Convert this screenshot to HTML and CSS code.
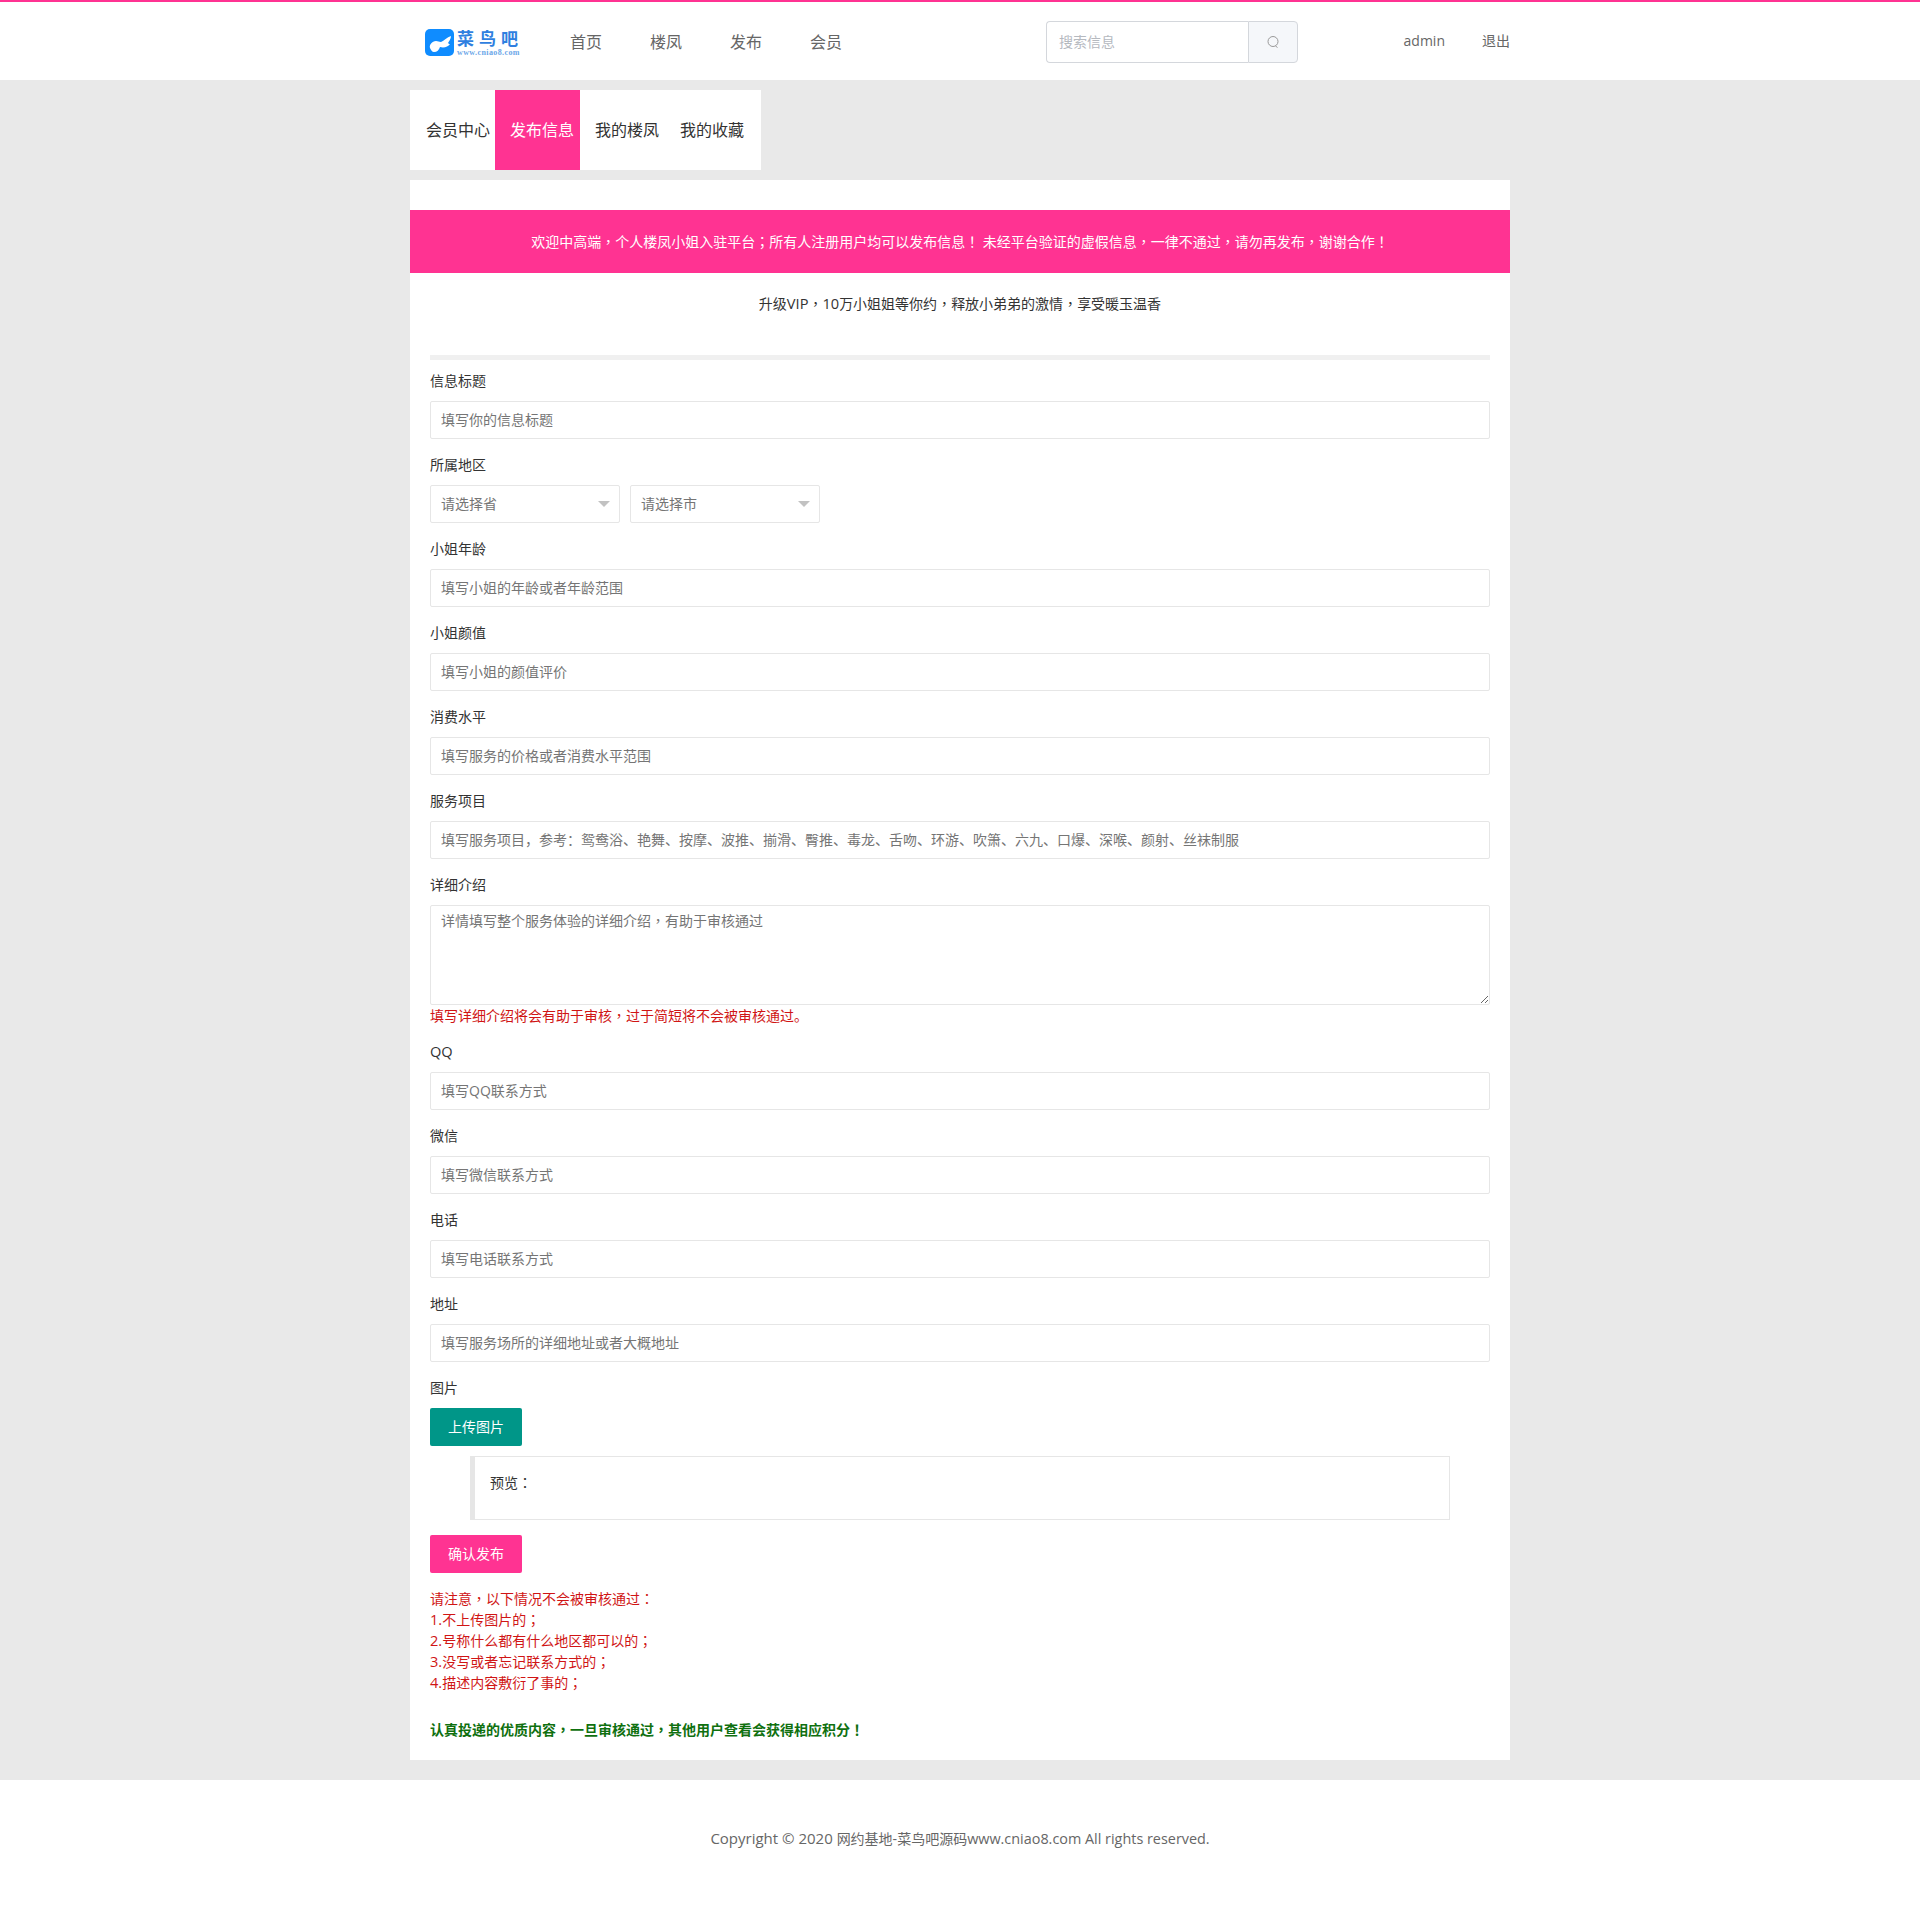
FILE: index.html
```html
<!DOCTYPE html>
<html lang="zh-CN">
<head>
<meta charset="utf-8">
<title>发布信息</title>
<link rel="stylesheet" href="styles.css">
</head>
<body>
<header class="topbar">
  <div class="wrap header-inner">
    <a class="logo" href="#">
      <svg class="logo-mark" viewBox="0 0 29 27" width="29" height="27">
        <rect width="29" height="27" rx="5" fill="#0f8cff"/>
        <path d="M5 19c-1-3 2-7 6-7 2 0 3 1 5 1 3-1 6-5 10-6 0 3-2 5-3 7 1 1 1 1 2 1-2 3-6 4-10 3-1 3-3 5-6 5-2 0-3-2-4-4z" fill="#fff"/>
      </svg>
      <span class="logo-text"><span class="logo-name">菜鸟吧</span><span class="logo-url">www.cniao8.com</span></span>
    </a>
    <nav class="nav">
      <a href="#">首页</a><a href="#">楼凤</a><a href="#">发布</a><a href="#">会员</a>
    </nav>
    <div class="search">
      <input class="search-input" placeholder="搜索信息">
      <button class="search-btn" aria-label="搜索">
        <svg viewBox="0 0 14 14" width="14" height="14" fill="none" stroke="#999" stroke-width="1"><circle cx="7" cy="6.5" r="5"/><path d="M9.5 11l2 1.5"/></svg>
      </button>
    </div>
    <div class="user"><a href="#">admin</a><a href="#">退出</a></div>
  </div>
</header>

<main class="wrap">
  <div class="tabs">
    <a class="tab" href="#">会员中心</a><a class="tab active" href="#">发布信息</a><a class="tab" href="#">我的楼凤</a><a class="tab" href="#">我的收藏</a>
  </div>

  <section class="panel">
    <div class="banner">欢迎中高端<span class="pt" lang="zh-TW">，</span>个人楼凤小姐入驻平台<span class="pt" lang="zh-TW">；</span>所有人注册用户均可以发布信息<span class="pt" lang="zh-TW">！</span> 未经平台验证的虚假信息<span class="pt" lang="zh-TW">，</span>一律不通过<span class="pt" lang="zh-TW">，</span>请勿再发布<span class="pt" lang="zh-TW">，</span>谢谢合作<span class="pt" lang="zh-TW">！</span></div>
    <p class="sub">升级<span class="latin">VIP</span><span class="pt" lang="zh-TW">，</span><span class="latin">10</span>万小姐姐等你约<span class="pt" lang="zh-TW">，</span>释放小弟弟的激情<span class="pt" lang="zh-TW">，</span>享受暖玉温香</p>
    <form class="form">
      <hr class="rule">
      <div class="item"><label>信息标题</label><input placeholder="填写你的信息标题"></div>
      <div class="item"><label>所属地区</label>
        <div class="selects">
          <div class="select">请选择省<i class="arrow"></i></div>
          <div class="select">请选择市<i class="arrow"></i></div>
        </div>
      </div>
      <div class="item"><label>小姐年龄</label><input placeholder="填写小姐的年龄或者年龄范围"></div>
      <div class="item"><label>小姐颜值</label><input placeholder="填写小姐的颜值评价"></div>
      <div class="item"><label>消费水平</label><input placeholder="填写服务的价格或者消费水平范围"></div>
      <div class="item"><label>服务项目</label><input placeholder="填写服务项目，参考：鸳鸯浴、艳舞、按摩、波推、揃滑、臀推、毒龙、舌吻、环游、吹箫、六九、口爆、深喉、颜射、丝袜制服"></div>
      <div class="item"><label>详细介绍</label>
        <textarea lang="zh-TW" placeholder="详情填写整个服务体验的详细介绍，有助于审核通过"></textarea>
        <div class="note">填写详细介绍将会有助于审核<span class="pt" lang="zh-TW">，</span>过于简短将不会被审核通过。</div>
      </div>
      <div class="item"><label class="latin">QQ</label><input placeholder="填写QQ联系方式"></div>
      <div class="item"><label>微信</label><input placeholder="填写微信联系方式"></div>
      <div class="item"><label>电话</label><input placeholder="填写电话联系方式"></div>
      <div class="item"><label>地址</label><input placeholder="填写服务场所的详细地址或者大概地址"></div>
      <div class="item item-upload"><label>图片</label>
        <button type="button" class="btn btn-green">上传图片</button>
        <blockquote class="preview">预览<span class="pt" lang="zh-TW">：</span></blockquote>
      </div>
      <button type="button" class="btn btn-pink">确认发布</button>
      <div class="rules">请注意<span class="pt" lang="zh-TW">，</span>以下情况不会被审核通过<span class="pt" lang="zh-TW">：</span><br><span class="latin">1.</span>不上传图片的<span class="pt" lang="zh-TW">；</span><br><span class="latin">2.</span>号称什么都有什么地区都可以的<span class="pt" lang="zh-TW">；</span><br><span class="latin">3.</span>没写或者忘记联系方式的<span class="pt" lang="zh-TW">；</span><br><span class="latin">4.</span>描述内容敷衍了事的<span class="pt" lang="zh-TW">；</span></div>
      <p class="reward">认真投递的优质内容<span class="pt" lang="zh-TW">，</span>一旦审核通过<span class="pt" lang="zh-TW">，</span>其他用户查看会获得相应积分<span class="pt" lang="zh-TW">！</span></p>
    </form>
  </section>
</main>

<footer class="footer"><span class="latin latin-wide">Copyright © 2020 </span>网约基地-菜鸟吧源码<span class="latin latin-tight">www.cniao8.com All rights reserved.</span></footer>
</body>
</html>
```
FILE: styles.css
```css
* { box-sizing: border-box; }
html, body { margin: 0; padding: 0; }
body {
  background: #e9e9e9;
  color: #333;
  font: 14px/20px "Open Sans", "Noto Sans CJK SC", sans-serif;
}
a { color: inherit; text-decoration: none; }
.wrap { width: 1100px; margin: 0 auto; }
.pt { font-family: "Noto Sans CJK TC", sans-serif; }
.latin { font-size: 14.6px; line-height: 1; }
.latin-wide { font-size: 15px; }
.latin-tight { font-size: 14.4px; }

.topbar { height: 80px; background: #fff; border-top: 2px solid #ff3392; }
.header-inner { display: flex; align-items: flex-start; height: 78px; }
.logo { display: flex; align-items: flex-start; width: 160px; margin-top: 27px; padding-left: 15px; }
.logo-mark { flex: none; }
.logo-text { display: flex; flex-direction: column; margin-left: 3px; margin-top: -1px; color: #2f7fe0; }
.logo-name { font: bold 17px/20px "Noto Sans CJK SC", sans-serif; letter-spacing: 5px; }
.logo-url { font: bold 8px/9px "Liberation Serif", serif; letter-spacing: .4px; color: #6aa6e8; white-space: nowrap; }
.nav { display: flex; gap: 48px; font-size: 16px; line-height: 24px; color: #666; margin-top: 28px; }
.search { display: flex; width: 252px; height: 42px; margin: 19px 0 0 204px; }
.search-input {
  width: 202px; height: 42px; padding: 0 12px 1px;
  border: 1px solid #d4d7dc; border-right: 0; border-radius: 4px 0 0 4px;
  font: inherit; font-size: 14px; outline: 0;
}
.search-input::placeholder { color: #b5b9bf; }
.search-btn {
  width: 50px; height: 42px; padding: 0;
  display: flex; align-items: center; justify-content: center;
  background: #f5f7fa; border: 1px solid #d4d7dc; border-radius: 0 4px 4px 0;
}
.user { display: flex; gap: 37px; margin: 29px 0 0 auto; color: #666; }

.tabs { display: flex; width: 351px; height: 80px; margin-top: 10px; background: #fff; }
.tab { width: 85px; padding-left: 15px; font-size: 16px; line-height: 80px; color: #333; white-space: nowrap; }
.tab:first-child { padding-left: 16px; }
.tab.active { background: #ff3392; color: #fff; }

.panel { margin-top: 10px; padding: 30px 0 20px; background: #fff; }
.banner { height: 63px; background: #ff3392; color: #fff; text-align: center; line-height: 63px; }
.sub { margin: 0; height: 82px; padding-top: 20px; text-align: center; color: #333; }

.form { padding: 0 20px; }
.rule { height: 5px; margin: 0 0 11px; border: 0; background: #f0f0f0; }
.item { margin-bottom: 16px; }
.item label { display: block; margin-bottom: 10px; color: #333; }
.item label.latin { line-height: 18px; margin-bottom: 12px; }
.item input, .item textarea {
  display: block; width: 100%; height: 38px; padding: 0 10px;
  border: 1px solid #e6e6e6; border-radius: 2px; font: inherit; color: #333; outline: 0; background: #fff;
}
.item input { padding-bottom: 1px; }
.item textarea { height: 100px; padding: 5px 10px; line-height: 20px; resize: vertical; }
.item input::placeholder, .item textarea::placeholder { color: #757575; }

.selects { display: flex; gap: 10px; }
.select {
  position: relative; width: 190px; height: 38px; padding: 0 10px;
  border: 1px solid #e6e6e6; border-radius: 2px; line-height: 36px; color: #757575;
}
.arrow {
  position: absolute; right: 9px; top: 15px;
  border: 6px solid transparent; border-top: 6px solid #c2c2c2; border-bottom: 0;
}

.note { line-height: 21px; color: #d01515; }
.btn {
  display: block; width: 92px; height: 38px; padding: 0;
  border: 0; border-radius: 2px; color: #fff; font: inherit; text-align: center;
}
.btn-green { background: #009688; }
.btn-pink { background: #ff3392; }
.preview {
  width: 980px; height: 64px; margin: 10px 0 15px 40px; padding: 15px;
  border: 1px solid #e6e6e6; border-left: 5px solid #e6e6e6; color: #333;
}
.item-upload { margin-bottom: 0; }
.rules { margin-top: 15px; line-height: 21px; color: #d01515; }
.reward { margin: 26px 0 0; font-weight: bold; color: #0f700f; line-height: 21px; }

.footer { margin-top: 20px; height: 137px; padding-top: 49px; background: #fff; text-align: center; color: #666; }
```
